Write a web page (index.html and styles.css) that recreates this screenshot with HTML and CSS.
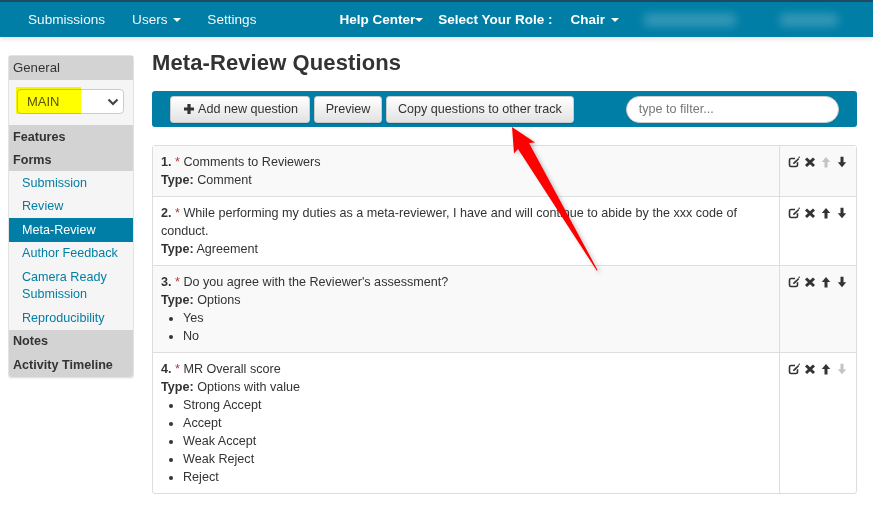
FILE: index.html
```html
<!DOCTYPE html>
<html lang="en">
<head>
<meta charset="utf-8">
<title>Meta-Review Questions</title>
<link rel="stylesheet" href="styles.css">
</head>
<body>
<svg class="defs" width="0" height="0" aria-hidden="true">
  <symbol id="i-plus" viewBox="0 0 12 12"><path d="M4.400 1h3.200v3.400H11v3.200H7.600V11H4.400V7.600H1V4.400h3.400z"/></symbol>
  <symbol id="i-edit" viewBox="0 0 12 12"><path fill="none" stroke="currentColor" stroke-width="1.600" d="M7 2.500H3A1.500 1.500 0 0 0 1.500 4v5A1.500 1.500 0 0 0 3 10.500h5A1.500 1.500 0 0 0 9.500 9V6.300"/><path d="M10.300 2 11.300 3 6.700 7.700 5 8.100 5.400 6.400z"/><circle cx="11.200" cy="1.300" r=".8"/></symbol>
  <symbol id="i-x" viewBox="0 0 12 12"><path d="M3 1.500l3 2.800 3-2.800 2 2-2.900 2.800 2.900 2.700-2 2-3-2.800-3 2.800-2-2 2.900-2.700L1 3.500z"/></symbol>
  <symbol id="i-up" viewBox="0 0 12 12"><path d="M6 1l4.200 5H7.500v5.500h-3V6H1.800z"/></symbol>
  <symbol id="i-down" viewBox="0 0 12 12"><path d="M4.500.8h3v5.400h2.700L6 11.200 1.800 6.200h2.700z"/></symbol>
  <symbol id="i-chev" viewBox="0 0 12 8"><path fill="none" stroke="currentColor" stroke-width="2.200" d="M1.500 1.500 6 6l4.500-4.500"/></symbol>
</svg>

<nav class="navbar">
  <a class="nav-item nav-sub">Submissions</a>
  <a class="nav-item nav-users">Users <i class="caret"></i></a>
  <a class="nav-item nav-settings">Settings</a>
  <a class="nav-item nav-strong nav-help">Help Center<i class="caret caret-tight"></i></a>
  <a class="nav-item nav-strong nav-role">Select Your Role :</a>
  <a class="nav-item nav-strong nav-chair">Chair <i class="caret"></i></a>
  <span class="blurred blurred-a"></span>
  <span class="blurred blurred-b"></span>
</nav>

<div class="page">
  <aside class="sidebar">
    <div class="side-head side-first">General</div>
    <div class="side-select">
      <select class="track-select"><option>MAIN</option></select>
      <svg class="chev"><use href="#i-chev"/></svg>
      <span class="highlight"></span>
    </div>
    <div class="side-head side-strong">Features</div>
    <div class="side-head side-strong">Forms</div>
    <ul class="side-list">
      <li><a>Submission</a></li>
      <li><a>Review</a></li>
      <li class="active"><a>Meta-Review</a></li>
      <li><a>Author Feedback</a></li>
      <li><a>Camera Ready Submission</a></li>
      <li><a>Reproducibility</a></li>
    </ul>
    <div class="side-head side-strong">Notes</div>
    <div class="side-head side-strong side-last">Activity Timeline</div>
  </aside>

  <main class="main">
    <h1 class="title">Meta-Review Questions</h1>
    <div class="toolbar">
      <button class="btn btn-add"><svg class="ico ico-plus"><use href="#i-plus"/></svg>Add new question</button>
      <button class="btn btn-preview">Preview</button>
      <button class="btn btn-copy">Copy questions to other track</button>
      <input class="filter" type="text" placeholder="type to filter...">
    </div>

    <table class="questions">
      <tr class="odd">
        <td class="q"><b>1.</b> <span class="req">*</span> Comments to Reviewers<br><b>Type:</b> Comment</td>
        <td class="acts"><div class="act-row">
          <svg class="ico"><use href="#i-edit"/></svg><svg class="ico"><use href="#i-x"/></svg><svg class="ico off"><use href="#i-up"/></svg><svg class="ico"><use href="#i-down"/></svg>
        </div></td>
      </tr>
      <tr>
        <td class="q"><b>2.</b> <span class="req">*</span> While performing my duties as a meta-reviewer, I have and will continue to abide by the xxx code of conduct.<br><b>Type:</b> Agreement</td>
        <td class="acts"><div class="act-row">
          <svg class="ico"><use href="#i-edit"/></svg><svg class="ico"><use href="#i-x"/></svg><svg class="ico"><use href="#i-up"/></svg><svg class="ico"><use href="#i-down"/></svg>
        </div></td>
      </tr>
      <tr class="odd">
        <td class="q"><b>3.</b> <span class="req">*</span> Do you agree with the Reviewer's assessment?<br><b>Type:</b> Options
          <ul class="opts"><li>Yes</li><li>No</li></ul></td>
        <td class="acts"><div class="act-row">
          <svg class="ico"><use href="#i-edit"/></svg><svg class="ico"><use href="#i-x"/></svg><svg class="ico"><use href="#i-up"/></svg><svg class="ico"><use href="#i-down"/></svg>
        </div></td>
      </tr>
      <tr>
        <td class="q"><b>4.</b> <span class="req">*</span> MR Overall score<br><b>Type:</b> Options with value
          <ul class="opts"><li>Strong Accept</li><li>Accept</li><li>Weak Accept</li><li>Weak Reject</li><li>Reject</li></ul></td>
        <td class="acts"><div class="act-row">
          <svg class="ico"><use href="#i-edit"/></svg><svg class="ico"><use href="#i-x"/></svg><svg class="ico"><use href="#i-up"/></svg><svg class="ico off"><use href="#i-down"/></svg>
        </div></td>
      </tr>
    </table>
  </main>
</div>

<svg class="arrow" width="873" height="514" viewBox="0 0 873 514" aria-hidden="true">
  <polygon class="arrow-shadow" points="514,129 537,144 531,145 600,272 599,273 522,151 518,155"/>
  <polygon class="arrow-fill" points="512,127 535,142.500 529,143 597.500,270 597,271 518,149 514,153.500"/>
</svg>
</body>
</html>
```
FILE: styles.css
```css
* { box-sizing: border-box; }
html, body { margin: 0; padding: 0; }
body {
  width: 873px;
  height: 514px;
  overflow: hidden;
  position: relative;
  background: #fff;
  color: #333;
  font-family: "Liberation Sans", Arial, sans-serif;
  font-size: 12.6px;
  line-height: 18px;
}
.defs { position: absolute; }

.navbar {
  display: flex;
  align-items: center;
  height: 37px;
  background: #007ea6;
  border-top: 2px solid #1f4a62;
  box-shadow: 0 2px 5px rgba(0, 0, 0, .12);
  color: #f2f7f9;
  font-size: 13.6px;
  padding-left: 28px;
}
.nav-item { white-space: nowrap; }
.nav-strong { font-weight: 700; font-size: 13.5px; color: #fff; }
.nav-users { margin-left: 27px; }
.nav-settings { margin-left: 26px; }
.nav-help { margin-left: 83px; }
.nav-role { margin-left: 15px; }
.nav-chair { margin-left: 18px; }
.caret {
  display: inline-block;
  width: 0;
  height: 0;
  margin-left: 2px;
  vertical-align: middle;
  border-top: 4px solid currentColor;
  border-left: 4px solid transparent;
  border-right: 4px solid transparent;
}
.caret-tight { margin-left: 0; }
.blurred {
  height: 12px;
  background: rgba(255, 255, 255, .22);
  filter: blur(5px);
  border-radius: 4px;
}
.blurred-a { width: 92px; margin-left: 25px; }
.blurred-b { width: 58px; margin-left: 44px; }

.page {
  display: flex;
  align-items: flex-start;
  padding: 18px 16px 0 8px;
  gap: 18px;
}

.sidebar {
  width: 126px;
  flex: none;
  background: #f5f5f5;
  border: 1px solid #e3e3e3;
  border-radius: 3px;
  box-shadow: 0 1px 1px rgba(0, 0, 0, .05);
}
.side-head {
  background: #d3d3d3;
  padding: 3.500px 4px 2.500px;
  height: 23.200px;
  line-height: 17.500px;
}
.side-first { height: 24px; padding-top: 2.500px; font-size: 13.200px; }
.side-strong { font-weight: 700; }
.side-last { border-radius: 0 0 3px 3px; height: 24px; }
.side-select {
  position: relative;
  height: 45px;
  padding: 9px 8px 0 8px;
}
.track-select {
  display: block;
  width: 107px;
  height: 25px;
  appearance: none;
  background: #fff;
  color: #555;
  border: 1px solid #ccc;
  border-radius: 4px;
  font-family: inherit;
  font-size: 13px;
  padding: 0 9px;
}
.chev {
  position: absolute;
  left: 98px;
  top: 18px;
  width: 12px;
  height: 8px;
  color: #444;
}
.highlight {
  position: absolute;
  left: 7px;
  top: 7px;
  width: 65px;
  height: 27px;
  background: #ffff00;
  mix-blend-mode: multiply;
}
.side-list { list-style: none; margin: 0; padding: 0; }
.side-list li { padding: 3.500px 5px 2.500px 13px; line-height: 17.500px; color: #007ea6; }
.side-list li.active { background: #007ea6; color: #fff; }

.main { flex: 1; min-width: 0; }
.title {
  margin: -1px 0 1px;
  font-size: 22px;
  line-height: 18px;
  height: 36px;
  letter-spacing: .1px;
  font-weight: 700;
  color: #333;
}
.toolbar {
  display: flex;
  align-items: center;
  height: 36px;
  background: #007ea6;
  border-radius: 3px;
  padding: 0 18px;
  margin-bottom: 18px;
}
.btn {
  height: 27px;
  margin-right: 4px;
  padding: 0 11px;
  border: 1px solid #ccc;
  border-radius: 3px;
  background: linear-gradient(#fff, #e2e2e2);
  box-shadow: 0 1px 1px rgba(0, 0, 0, .15);
  color: #333;
  font-family: inherit;
  font-size: 12.6px;
  line-height: 18px;
  white-space: nowrap;
}
.btn-add { padding-left: 12px; padding-right: 11px; }
.btn-preview { padding: 0 10.500px; }
.ico-plus { margin-right: 3px; vertical-align: -2px; width: 11px; height: 11px; }
.filter {
  width: 213px;
  height: 27px;
  margin-left: 48px;
  border: 1px solid #ccc;
  border-radius: 14px;
  padding: 0 12px;
  font-family: inherit;
  font-size: 12.6px;
  color: #555;
  background: #fff;
}
.filter::placeholder { color: #777; opacity: 1; }

.questions {
  width: 705px;
  border-collapse: separate;
  border-spacing: 0;
  border: 1px solid #ddd;
  border-radius: 3px;
}
.questions td {
  vertical-align: top;
  padding: 7px 8px;
  border-top: 1px solid #ddd;
}
.questions tr:first-child td { border-top: 0; }
.questions .odd td { background: #f9f9f9; }
.q b { font-weight: 700; }
.req { color: #b03a3a; }
.questions .acts { width: 77px; border-left: 1px solid #ddd; padding: 8px 8px; }
.act-row { display: flex; gap: 4px; padding-top: 2px; }
.ico { width: 12px; height: 12px; fill: #333; color: #333; flex: none; }
.ico.off { fill: #c4c4c4; color: #c4c4c4; }
.opts { margin: 0; padding: 0 0 0 22px; }

.arrow { position: absolute; left: 0; top: 0; pointer-events: none; }
.arrow-fill { fill: #ff0000; }
.arrow-shadow { fill: rgba(0, 0, 0, .25); filter: blur(2px); }
```
